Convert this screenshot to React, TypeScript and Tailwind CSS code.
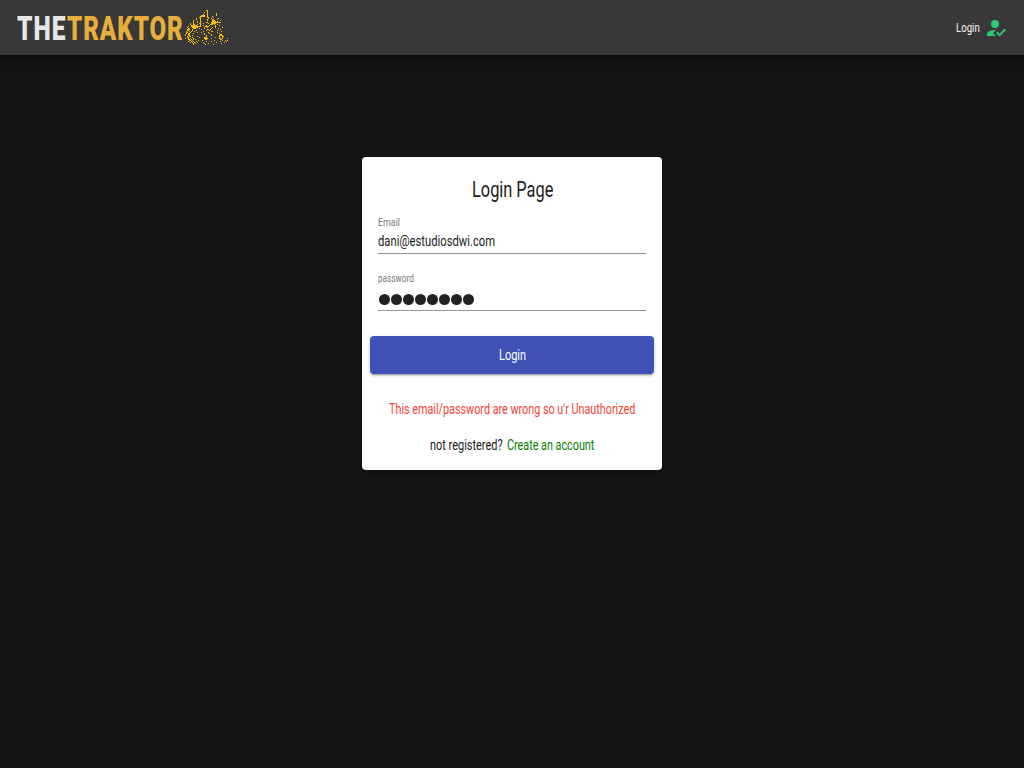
import { useLayoutEffect, useRef, useState } from "react";

function Fit({ text, width, className = "" }: { text: string; width: number; className?: string }) {
  const ref = useRef<HTMLSpanElement>(null);
  const [scale, setScale] = useState(1);
  useLayoutEffect(() => {
    if (ref.current) setScale(width / ref.current.offsetWidth);
  }, [text, width]);
  return (
    <span className={`inline-block whitespace-nowrap ${className}`} style={{ width }}>
      <span ref={ref} className="inline-block origin-left" style={{ transform: `scaleX(${scale})` }}>
        {text}
      </span>
    </span>
  );
}

const rows: [number, string][] = [
  [10, "22,23"], [11, "23"], [12, "20,23"], [13, "23,32"], [14, "19,23,32"], [15, "17-20,23,32"],
  [16, "16-20,23,28"], [17, "15,16,23,24,29"], [18, "12,16,24,27,34"], [19, "12,16,23,28,29,33"],
  [20, "9,16,23,28-30,36"], [21, "9,13,16,28-31,33"], [22, "9,13,16,22,23,27-36"],
  [23, "6,9,15,16,19,24,27-31"], [24, "6,9,10,13,16,26-28,30,33"], [25, "7-12,16,19,22,25,31,35"],
  [26, "4,7-16,21-24,31"], [27, "3,8-13,20,23,28,31,38"], [28, "4,5,9-11,15,20,27,34"],
  [29, "3-5,8,17,23,24,26,36"], [30, "3,4,8,12,22,25,33"], [31, "2,5,7,10,19,27,28,37"],
  [32, "2,3,6,13,17,24,33"], [33, "2,4,5,9,20,25,35"], [34, "1,4,5,20,27,36,37"],
  [35, "1,4,5,8,22,27,35-38"], [36, "3,5,6,13,22,35,38,39"], [37, "3,4,8,15,20-22,31,35,38"],
  [38, "1,4,6,9,20-23,27,35,36,38,43"], [39, "4,5,7,9,11,21,22,36,37"], [40, "5,6,8,14,18,30,38,41,43"],
  [41, "4,7,9,12,22,27,36,42"], [42, "6,8,10,13,19,32,40"], [43, "9,11,20,24,37"], [44, "9,21,29"],
];

const path = rows
  .map(([y, s]) =>
    s
      .split(",")
      .map((r) => {
        const [a, b] = r.split("-").map(Number);
        return `M${a} ${y}h${(b || a) - a + 1}v1h-${(b || a) - a + 1}z`;
      })
      .join(""),
  )
  .join("");

export default function App() {
  return (
    <div className="min-h-screen bg-[#151515] font-['Roboto',sans-serif] text-[#212121]">
      <header className="flex h-[55px] items-center bg-[#383838] pr-4 pl-[17px] shadow-[0_3px_12px_rgba(0,0,0,0.5)]">
        <div className="flex h-[55px] items-center text-[34px] leading-[55px] font-black tracking-[0.04em]">
          <Fit text="THE" width={49} className="h-[53px] text-[#e8e8e8]" />
          <Fit text="TRAKTOR" width={117} className="ml-px h-[53px] text-[#e8ae3b]" />
          <svg className="h-[55px] w-[45px]" viewBox="0 0 45 55" shapeRendering="crispEdges">
            <path d={path} fill="#f9bd0b" />
          </svg>
        </div>
        <div className="ml-auto flex items-center gap-[5px] text-[13.5px] text-[#f4f4f4]">
          <Fit text="Login" width={23.5} />
          <svg className="size-6 fill-[#2ecc71]" viewBox="0 0 24 24">
            <path d="M9 17l3-2.94c-.39-.04-.68-.06-1-.06-2.67 0-8 1.34-8 4v2h9l-3-3z" />
            <circle cx="11" cy="8" r="4" />
            <path d="M15.47 20.5L12 17l1.4-1.41 2.07 2.08 5.13-5.17 1.4 1.41z" />
          </svg>
        </div>
      </header>
      <main className="mx-auto mt-[102px] h-[313px] w-[300px] rounded bg-white px-2 pt-4 shadow-[0_2px_4px_rgba(0,0,0,0.4)]">
        <h1 className="flex h-8 justify-center pl-px text-[22px] leading-[33px]">
          <Fit text="Login Page" width={81} />
        </h1>
        <div className="mx-2 h-[49px] border-b border-[#949494] pt-[11px]">
          <div className="flex h-[14px] text-[10.5px] leading-[14px] text-[#777]"><Fit text="Email" width={22} /></div>
          <div className="flex h-[23px] text-[15px] leading-[23px]"><Fit text="dani@estudiosdwi.com" width={117} /></div>
        </div>
        <div className="mx-2 h-[57px] border-b border-[#949494] pt-[18px]">
          <div className="flex h-[14px] text-[10.5px] leading-[14px] text-[#777]"><Fit text="password" width={36} /></div>
          <div className="mt-[8px] flex gap-[1px] pl-[1px]">
            {Array.from({ length: 8 }, (_, i) => (
              <span key={i} className="size-[11px] rounded-full bg-[#212121]" />
            ))}
          </div>
        </div>
        <button className="mt-[25px] flex h-[38px] w-full justify-center rounded bg-[#3f51b5] pl-px text-[15px] leading-[38px] text-white shadow-[0_3px_1px_-2px_rgba(0,0,0,.2),0_2px_2px_rgba(0,0,0,.14),0_1px_5px_rgba(0,0,0,.12)]">
          <Fit text="Login" width={27} />
        </button>
        <p className="mt-[23px] flex h-6 justify-center text-[15px] leading-6 text-[#f44336]">
          <Fit text="This email/password are wrong so u'r Unauthorized" width={246} />
        </p>
        <p className="mt-3 flex h-6 justify-center gap-1 text-[15px] leading-6">
          <Fit text="not registered?" width={73} />
          <Fit text="Create an account" width={87} className="text-[#008000]" />
        </p>
      </main>
    </div>
  );
}
